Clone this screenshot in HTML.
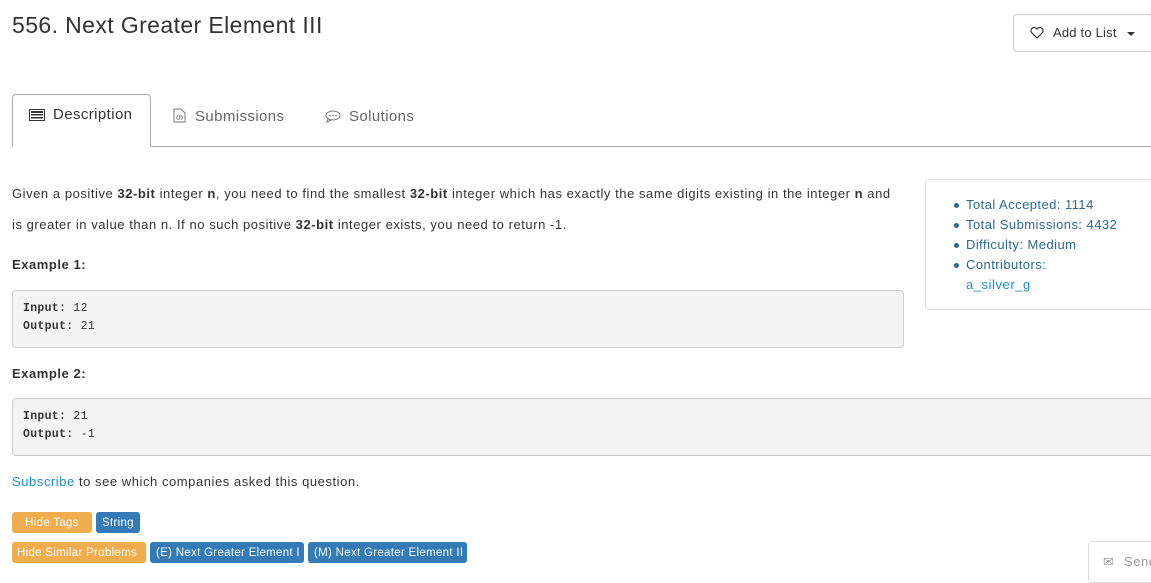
<!DOCTYPE html>
<html><head><style>
body{margin:0;width:1151px;height:571px;overflow:hidden;font-family:"Liberation Sans",sans-serif;color:#333;background:#fff;position:relative;font-size:13px;letter-spacing:.55px}
.a{position:absolute}
h1{position:absolute;left:12px;top:12px;margin:0;font-size:23px;font-weight:normal;color:#333;letter-spacing:.4px}
.btn{left:1013px;top:14px;width:140px;height:38px;border:1px solid #ccc;border-radius:4px;box-sizing:border-box;font-size:13px;line-height:36px;letter-spacing:.2px}
.tabline{left:12px;top:146px;width:1139px;border-top:1px solid #aaa}
.tab{top:94px;left:12px;width:139px;height:53px;border:1px solid #aaa;border-bottom:1px solid #fff;border-radius:4px 4px 0 0;box-sizing:border-box;background:#fff}
.tt{top:107px;font-size:15px;color:#666;letter-spacing:.4px}
p{margin:0}
.pre{background:#f4f4f4;border:1px solid #ccc;border-radius:4px;box-sizing:border-box;font-family:"Liberation Mono",monospace;font-size:11.5px;line-height:18px;padding:9px 10px;letter-spacing:.3px}
.side{left:925px;top:179px;width:240px;height:131px;border:1px solid #ddd;border-radius:4px;box-sizing:border-box;color:#2a6a8e}
.side div{position:absolute;left:40px;font-size:13px;letter-spacing:.45px}
.side div:before{content:"";position:absolute;left:-12px;top:6px;width:5px;height:5px;border-radius:50%;background:#2a6a8e}
.tag{height:21px;padding:3px 6px 0;color:#fff;font-size:11.5px;line-height:16px;border-radius:3px;box-sizing:border-box;letter-spacing:.3px;white-space:nowrap}
.o{background:#f0ad4e}.b{background:#337ab7}
</style></head><body>
<h1>556. Next Greater Element III</h1>
<div class="a btn"><svg class="a" style="left:16px;top:12px" width="14" height="12" viewBox="0 0 14 12"><path d="M7 11 L1.5 5.5 A3 3 0 0 1 7 2 A3 3 0 0 1 12.5 5.5 Z" fill="none" stroke="#333" stroke-width="1.2"/></svg><span class="a" style="left:39px;top:0">Add to List</span><span class="a" style="left:113px;top:17px;border-left:4px solid transparent;border-right:4px solid transparent;border-top:4px solid #333"></span></div>
<div class="a tabline"></div>
<div class="a tab"></div>
<svg class="a" style="left:29px;top:109px" width="16" height="12" viewBox="0 0 16 12"><rect x="0.5" y="0.5" width="15" height="11" fill="none" stroke="#333"/><rect x="2" y="2" width="12" height="2" fill="#333"/><rect x="2" y="5" width="12" height="1.5" fill="#333"/><rect x="2" y="8" width="12" height="1.5" fill="#333"/></svg>
<span class="a tt" style="left:53px;top:106px;color:#333">Description</span>
<svg class="a" style="left:173px;top:108px" width="13" height="15" viewBox="0 0 13 15"><path d="M1 1H8L12 5V14H1Z" fill="none" stroke="#777"/><path d="M5 7L3.5 9.5 5 12M8 7L9.5 9.5 8 12M7 7L6 12" stroke="#777" fill="none" stroke-width=".8"/></svg>
<span class="a tt" style="left:195px;top:108px">Submissions</span>
<svg class="a" style="left:325px;top:110px" width="16" height="13" viewBox="0 0 16 13"><ellipse cx="8" cy="5.5" rx="7" ry="4.5" fill="none" stroke="#777"/><path d="M3 9 L2 12 L6 10" fill="none" stroke="#777"/><circle cx="5" cy="5.5" r=".9" fill="#777"/><circle cx="8" cy="5.5" r=".9" fill="#777"/><circle cx="11" cy="5.5" r=".9" fill="#777"/></svg>
<span class="a tt" style="left:349px;top:108px">Solutions</span>
<p class="a" style="left:12px;top:178px;width:888px;line-height:31px">Given a positive <b>32-bit</b> integer <b>n</b>, you need to find the smallest <b>32-bit</b> integer which has exactly the same digits existing in the integer <b>n</b> and is greater in value than n. If no such positive <b>32-bit</b> integer exists, you need to return -1.</p>
<b class="a" style="left:12px;top:257px">Example 1:</b>
<div class="a pre" style="left:12px;top:290px;width:892px;height:58px"><b>Input:</b> 12<br><b>Output:</b> 21</div>
<b class="a" style="left:12px;top:366px">Example 2:</b>
<div class="a pre" style="left:12px;top:398px;width:1145px;height:58px"><b>Input:</b> 21<br><b>Output:</b> -1</div>
<p class="a" style="left:12px;top:474px"><span style="color:#1a8fd1">Subscribe</span> to see which companies asked this question.</p>
<div class="a tag o" style="left:12px;top:512px;width:80px;text-align:center">Hide Tags</div>
<div class="a tag b" style="left:96px;top:512px;width:44px">String</div>
<div class="a tag o" style="left:12px;top:542px;width:134px;padding:3px 5px 0">Hide Similar Problems</div>
<div class="a tag b" style="left:150px;top:542px;width:154px">(E) Next Greater Element I</div>
<div class="a tag b" style="left:308px;top:542px;width:159px">(M) Next Greater Element II</div>
<div class="a side">
<div style="top:17px">Total Accepted: 1114</div>
<div style="top:37px">Total Submissions: 4432</div>
<div style="top:57px">Difficulty: Medium</div>
<div style="top:77px">Contributors:</div>
<span class="a" style="left:40px;top:97px;color:#1a8fd1">a_silver_g</span>
</div>
<div class="a" style="left:1088px;top:541px;width:80px;height:40px;border:1px solid #ddd;border-radius:4px;color:#999;font-size:13px"><span class="a" style="left:14px;top:12px;font-size:13px">✉</span><span class="a" style="left:35px;top:12px">Send</span></div>
</body></html>
